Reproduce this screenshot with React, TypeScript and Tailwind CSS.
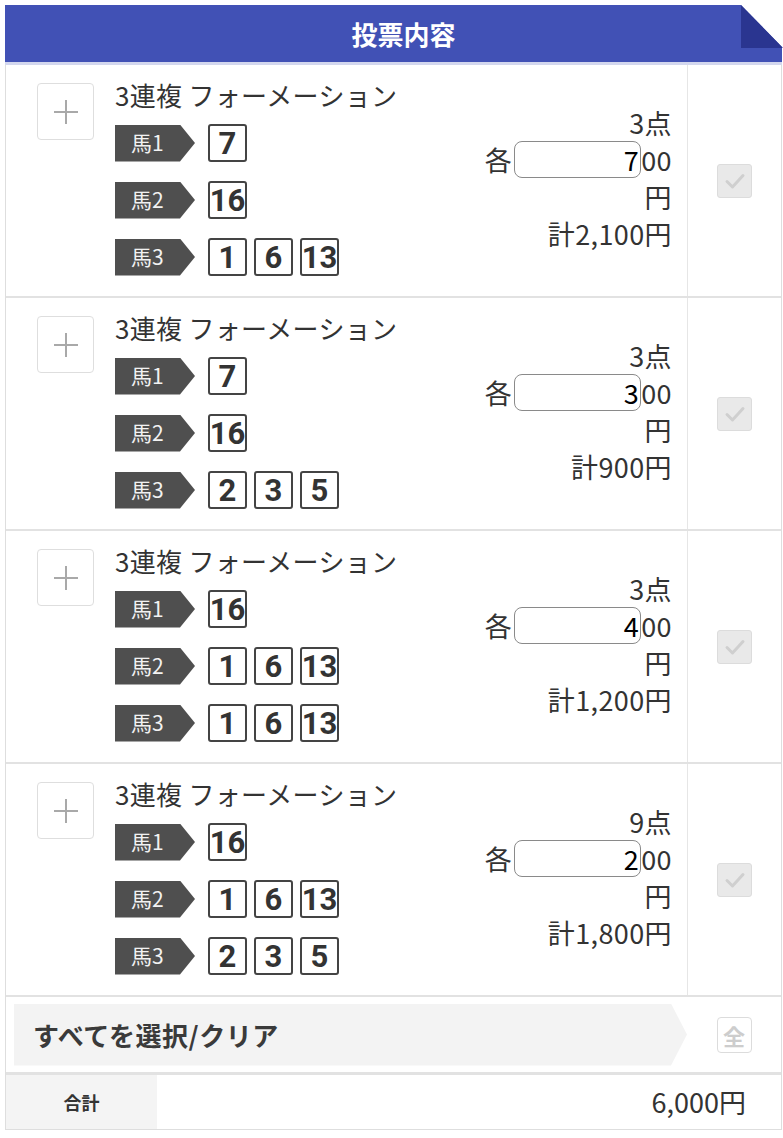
import React from "react";

interface Bet {
  horses: string[][];
  points: string;
  unit: string;
  total: string;
}

const bets: Bet[] = [
  { horses: [["7"], ["16"], ["1", "6", "13"]], points: "3点", unit: "7", total: "計2,100円" },
  { horses: [["7"], ["16"], ["2", "3", "5"]], points: "3点", unit: "3", total: "計900円" },
  { horses: [["16"], ["1", "6", "13"], ["1", "6", "13"]], points: "3点", unit: "4", total: "計1,200円" },
  { horses: [["16"], ["1", "6", "13"], ["2", "3", "5"]], points: "9点", unit: "2", total: "計1,800円" },
];

const CheckBox = () => (
  <div className="flex h-[34px] w-[35px] items-center justify-center rounded-[3px] border border-[#dcdcdc] bg-[#e9e9e9]">
    <svg width="22" height="18" viewBox="0 0 22 18" fill="none">
      <path d="M3 9.5l5.5 5.5L19 3.5" stroke="#cfcfcf" strokeWidth="3" strokeLinecap="round" strokeLinejoin="round" />
    </svg>
  </div>
);

const BetRow = ({ bet }: { bet: Bet }) => (
  <div className="flex h-[233px] border-b-2 border-[#e2e2e2]">
    {/* left */}
    <div className="flex flex-1 pl-[31px] pr-[15px]">
      <div className="mt-[18px] flex h-[57px] w-[57px] shrink-0 items-center justify-center rounded-[4px] border-[1.5px] border-[#dedede]">
        <svg width="26" height="26" viewBox="0 0 26 26">
          <path d="M13 1v24M1 13h24" stroke="#a9a9a9" strokeWidth="2" />
        </svg>
      </div>
      <div className="ml-[21px] flex-1">
        <div className="mt-[15px] text-[26px] leading-[30px] tracking-[0.3px] text-[#333]">3連複 フォーメーション</div>
        <div className="mt-[13px] flex flex-col gap-[17px]">
          {bet.horses.map((nums, i) => (
            <div key={i} className="flex h-[40px] items-center">
              <div className="flex h-[37px] w-[80px] items-center bg-[#4f4f4f] pl-[16px] text-[21px] text-[#f2f2f2] [clip-path:polygon(0_0,calc(100%-15px)_0,100%_50%,calc(100%-15px)_100%,0_100%)]">
                馬{i + 1}
              </div>
              <div className="ml-[13px] flex gap-[7px]">
                {nums.map((n) => (
                  <div
                    key={n}
                    className="flex h-[38px] w-[39px] items-center justify-center rounded-[3px] border-2 border-[#444] font-['Roboto',sans-serif] text-[31px] font-bold leading-none text-[#333]"
                  >
                    {n}
                  </div>
                ))}
              </div>
            </div>
          ))}
        </div>
      </div>
      {/* money */}
      <div className="flex flex-col items-end justify-center pb-[6px] text-[27px] leading-[37px] tracking-[0.4px] text-[#333]">
        <div>{bet.points}</div>
        <div className="flex items-center">
          <span>各</span>
          <div className="ml-[2px] flex h-[37px] w-[127px] items-center justify-end rounded-[8px] border border-[#8a8a8a] pr-[1px] text-black">
            {bet.unit}
          </div>
          <span>00</span>
        </div>
        <div>円</div>
        <div>{bet.total}</div>
      </div>
    </div>
    {/* right */}
    <div className="flex w-[94px] items-center justify-center border-l border-[#e6e6e6]">
      <CheckBox />
    </div>
  </div>
);

export default function App() {
  return (
    <div className="min-h-[1138px] bg-white pl-[5px] pr-[1px] pt-[5px] font-['Noto_Sans_CJK_JP',sans-serif]">
      {/* header */}
      <div className="relative flex h-[57px] items-center justify-center bg-[#4151b5] pl-[20px] text-[26px] font-bold text-white">
        投票内容
        <svg className="absolute right-[-1px] top-0" width="42" height="43" viewBox="0 0 42 43">
          <polygon points="0,0 42,0 42,43" fill="#ffffff" />
          <polygon points="0,0 42,43 0,43" fill="#2a3590" />
        </svg>
      </div>
      <div className="h-[3px] bg-[#d3d7ee]" />

      <div className="border-x border-[#dedede]">
        {bets.map((b, i) => (
          <BetRow key={i} bet={b} />
        ))}

        {/* select all */}
        <div className="flex h-[78px] items-center border-b-[3px] border-[#e2e2e2] pl-[8px]">
          <div className="flex h-[62px] flex-1 items-center bg-[#f3f3f3] pl-[19px] text-[26px] font-bold tracking-[0.5px] text-[#3a3a3a] [clip-path:polygon(0_0,calc(100%-16px)_0,100%_50%,calc(100%-16px)_100%,0_100%)]">
            すべてを選択/クリア
          </div>
          <div className="flex w-[94px] items-center justify-center">
            <div className="flex h-[36px] w-[35px] items-center justify-center rounded-[4px] border-[1.5px] border-[#dcdcdc] bg-white text-[22px] font-bold leading-none text-[#cdcdcd]">
              全
            </div>
          </div>
        </div>

        {/* total */}
        <div className="flex h-[55px] items-stretch border-b border-[#dedede]">
          <div className="flex w-[151px] items-center justify-center bg-[#f4f4f4] text-[18px] font-bold text-[#333]">
            合計
          </div>
          <div className="flex flex-1 items-center justify-end pr-[35px] text-[27px] text-[#333]">6,000円</div>
        </div>
      </div>
    </div>
  );
}
